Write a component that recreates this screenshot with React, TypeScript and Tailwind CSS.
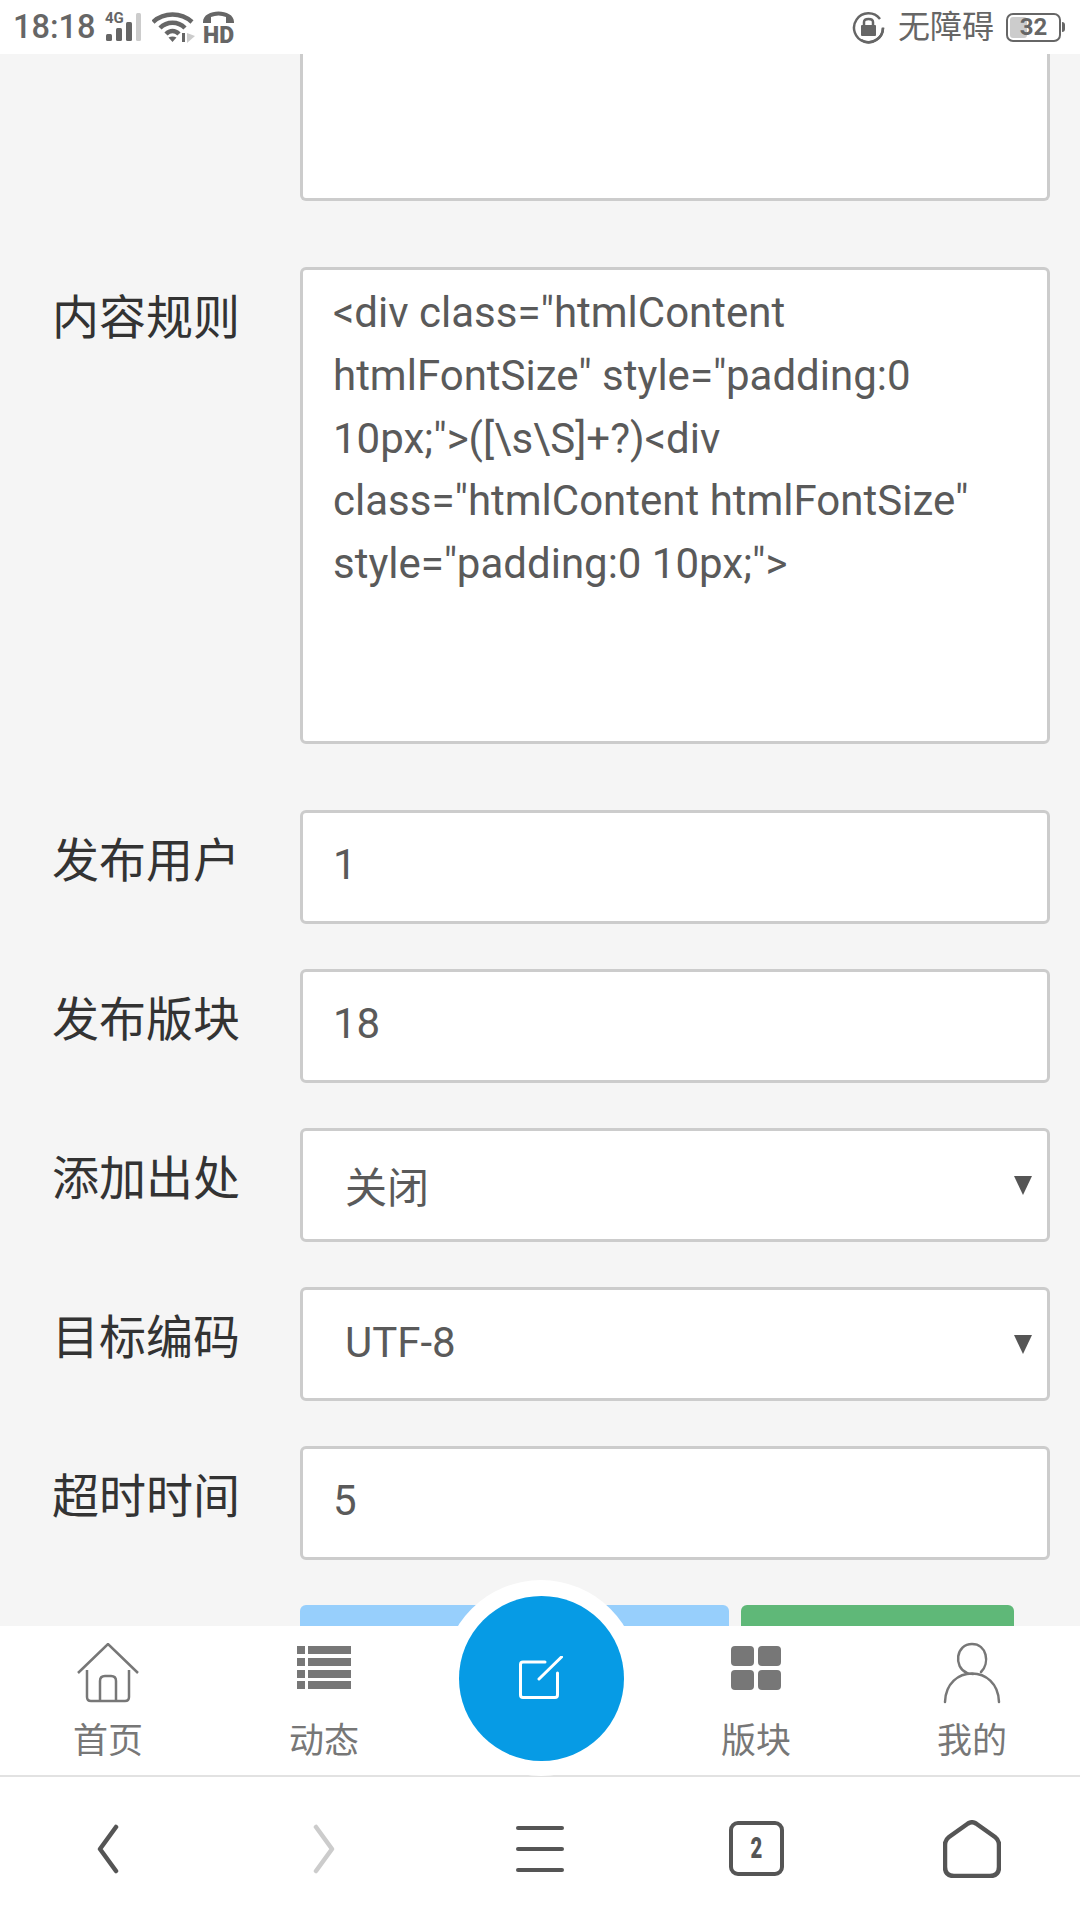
import { Fragment } from "react";

const LABEL_FONT = "font-['Roboto','Noto_Sans_CJK_SC',sans-serif]";

function StatusBar() {
  return (
    <div className={`flex h-[54px] shrink-0 items-center justify-between bg-white pl-[13px] pr-[15px] text-[#666] ${LABEL_FONT}`}>
      <div className="flex items-center">
        <span className="text-[32.5px] font-medium leading-none">18:18</span>
        {/* 4G signal */}
        <svg className="ml-[10px] overflow-visible" width="37" height="30" viewBox="0 0 37 30">
          <text x="0" y="11" fontSize="15" fontWeight="700" fill="#666" fontFamily="Roboto">4G</text>
          <rect x="1" y="22" width="6" height="7" rx="1.5" fill="#666" />
          <rect x="11" y="16" width="6" height="13" rx="1.5" fill="#666" />
          <rect x="21" y="10" width="6" height="19" rx="1.5" fill="#666" />
          <rect x="31" y="1" width="5" height="28" rx="1.5" fill="#ccc" />
        </svg>
        {/* wifi */}
        <svg className="ml-[10px]" width="44" height="32" viewBox="0 0 44 32" fill="none">
          <path d="M1 11 C12 1 29 1 40 11" stroke="#666" strokeWidth="4.500" />
          <path d="M8 17 C15 10 26 10 33 17" stroke="#666" strokeWidth="4.500" />
          <path d="M14 23 C18 19 23 19 27 23" stroke="#666" strokeWidth="4.500" />
          <path d="M20.500 31 L16.500 26.500 C19 25 22 25 24.500 26.500 Z" fill="#666" />
          <path d="M30 22 h3 v9 h-3z" fill="#666" />
          <path d="M35 22 L43 25 L35 32 Z" fill="#ccc" />
        </svg>
        {/* HD call */}
        <svg className="ml-[7px] overflow-visible" width="31" height="34" viewBox="0 0 31 34">
          <path d="M0 12 C0 -2 31 -2 31 12 L31 13 L23 13 L23 7 C18 5 13 5 8 7 L8 13 L0 13 Z" fill="#666" />
          <text x="0" y="33" fontSize="24" fontWeight="900" fill="#666" fontFamily="Roboto" textLength="31" lengthAdjust="spacingAndGlyphs">HD</text>
        </svg>
      </div>
      <div className="flex items-center">
        <svg width="33" height="33" viewBox="0 0 33 33" fill="none">
          <path d="M28 8 A14.500 14.500 0 1 0 31 16.500" stroke="#666" strokeWidth="2.500" />
          <path d="M31 17 A14.500 14.500 0 0 1 9 29" stroke="#666" strokeWidth="2.500" />
          <rect x="9" y="14" width="15" height="11" rx="1" fill="#666" />
          <path d="M12 14 V11 C12 7 21 7 21 11 V14" stroke="#666" strokeWidth="2.500" />
        </svg>
        <span className="ml-[13px] text-[32px] leading-none">无障碍</span>
        <div className="relative ml-[12px] flex h-[29px] w-[55px] items-center justify-center overflow-hidden rounded-[7px] border-2 border-[#666]">
          <div className="absolute bottom-[2px] left-[2px] top-[2px] w-[17px] rounded-[3px] bg-[#ccc]" />
          <span className="relative text-[24px] font-bold leading-none">32</span>
        </div>
        <div className="ml-[1px] h-[10px] w-[3px] rounded-r-sm bg-[#666]" />
      </div>
    </div>
  );
}

function Field({ label, value, select, valueClass = "" }: { label: string; value: string; select?: boolean; valueClass?: string }) {
  return (
    <div className="flex items-center">
      <div className="w-[300px] pb-[14px] pl-[52px] text-[47px] leading-none text-[#333]">{label}</div>
      <div className={`flex h-[114px] w-[750px] items-center justify-between rounded-[6px] border-[3px] border-[#ccc] bg-white text-[42px] text-[#5a5a5a] ${select ? "pl-[42px] pr-[15px]" : "pl-[30px]"}`}>
        <span className={`leading-none ${valueClass}`}>{value}</span>
        {select && (
          <svg width="18" height="19" viewBox="0 0 18 19">
            <path d="M0 0 H18 L9 19 Z" fill="#555" />
          </svg>
        )}
      </div>
    </div>
  );
}

function Form() {
  const rule = [
    '<div class="htmlContent',
    'htmlFontSize" style="padding:0',
    '10px;">([\\s\\S]+?)<div',
    'class="htmlContent htmlFontSize"',
    'style="padding:0 10px;">',
  ];
  return (
    <div className="flex min-h-0 flex-1 flex-col overflow-hidden bg-[#f5f5f5]">
      <div className="ml-[300px] h-[147px] w-[750px] shrink-0 rounded-b-[6px] border-[3px] border-t-0 border-[#ccc] bg-white" />

      <div className="mt-[66px] flex shrink-0">
        <div className="w-[300px] pl-[52px] pt-[27px] text-[47px] leading-none text-[#333]">内容规则</div>
        <div className="h-[477px] w-[750px] rounded-[6px] border-[3px] border-[#ccc] bg-white pl-[30px] pt-[12px] text-[42px] leading-[62.8px] text-[#5a5a5a]">
          {rule.map((line) => (
            <Fragment key={line}>
              {line}
              <br />
            </Fragment>
          ))}
        </div>
      </div>

      <div className="mt-[66px] flex shrink-0 flex-col gap-[45px]">
        <Field label="发布用户" value="1" valueClass="pb-[4px]" />
        <Field label="发布版块" value="18" valueClass="pb-[4px]" />
        <Field label="添加出处" value="关闭" select valueClass="pt-[8px]" />
        <Field label="目标编码" value="UTF-8" select valueClass="pb-[2px]" />
        <Field label="超时时间" value="5" valueClass="pb-[4px]" />
      </div>

      <div className="ml-[300px] mt-[45px] flex shrink-0 gap-[12px]">
        <div className="h-[60px] w-[429px] rounded-t-[6px] bg-[#97cffc]" />
        <div className="h-[60px] w-[273px] rounded-t-[6px] bg-[#5fb878]" />
      </div>
    </div>
  );
}

function TabItem({ label, children }: { label: string; children: React.ReactNode }) {
  return (
    <div className="flex w-[216px] flex-col items-center pt-[16px]">
      <div className="flex h-[62px] items-center justify-center">{children}</div>
      <span className="mt-[16px] text-[35px] leading-[44px] text-[#777]">{label}</span>
    </div>
  );
}

function TabBar() {
  return (
    <div className={`relative flex h-[151px] shrink-0 border-b-2 border-[#e2e2e2] bg-white ${LABEL_FONT}`}>
      <TabItem label="首页">
        <svg width="62" height="60" viewBox="0 0 62 60" fill="none" stroke="#777" strokeWidth="2.500">
          <path d="M1 30 L31 1 L61 30" />
          <path d="M10 27 V54 Q10 58 14 58 H48 Q52 58 52 54 V27" />
          <path d="M23 58 V38 Q23 33 28 33 H34 Q39 33 39 38 V58" />
        </svg>
      </TabItem>
      <TabItem label="动态">
        <svg className="mb-[11px]" width="56" height="46" viewBox="0 0 56 46" fill="#777">
          <rect x="1" y="1" width="8" height="8" />
          <rect x="12" y="1" width="43" height="8" />
          <rect x="1" y="13" width="8" height="8" />
          <rect x="12" y="13" width="43" height="8" />
          <rect x="1" y="25" width="8" height="8" />
          <rect x="12" y="25" width="43" height="8" />
          <rect x="1" y="36" width="8" height="8" />
          <rect x="12" y="36" width="43" height="8" />
        </svg>
      </TabItem>
      <div className="w-[216px]" />
      <TabItem label="版块">
        <svg className="mb-[11px]" width="52" height="46" viewBox="0 0 52 46" fill="#777">
          <rect x="1" y="1" width="23" height="20" rx="4" />
          <rect x="28" y="1" width="23" height="20" rx="4" />
          <rect x="1" y="25" width="23" height="20" rx="4" />
          <rect x="28" y="25" width="23" height="20" rx="4" />
        </svg>
      </TabItem>
      <TabItem label="我的">
        <svg width="58" height="62" viewBox="0 0 58 62" fill="none" stroke="#777" strokeWidth="2.500" strokeLinecap="round">
          <path d="M38 30 C47 21 44 2 29 2 C13 2 10 25 24 31 C26 32 28 32 30 32" />
          <path d="M2 60 C3 22 55 22 56 60" />
        </svg>
      </TabItem>
      {/* white ring with the compose button on top of the page */}
      <div className="absolute left-[443px] top-[-46px] flex h-[196px] w-[196px] items-center justify-center rounded-full bg-white">
        <div className="flex h-[165px] w-[165px] items-center justify-center rounded-full bg-[#069be5]">
          <svg className="-ml-[1px]" width="44" height="44" viewBox="0 0 44 44" fill="none" stroke="#fff" strokeWidth="3" strokeLinecap="round" strokeLinejoin="round">
            <path d="M26 6 H4 Q1.500 6 1.500 8.500 V39 Q1.500 41.500 4 41.500 H36 Q38.500 41.500 38.500 39 V17" />
            <path d="M20 23 L42.500 1" />
          </svg>
        </div>
      </div>
    </div>
  );
}

function BrowserBar() {
  return (
    <div className="flex h-[143px] shrink-0 items-center bg-white">
      <div className="flex w-[216px] justify-center">
        <svg width="22" height="50" viewBox="0 0 22 50" fill="none" stroke="#555" strokeWidth="4.500" strokeLinecap="round" strokeLinejoin="round">
          <path d="M19 3 L3 25 L19 47" />
        </svg>
      </div>
      <div className="flex w-[216px] justify-center">
        <svg width="22" height="50" viewBox="0 0 22 50" fill="none" stroke="#ccc" strokeWidth="4.500" strokeLinecap="round" strokeLinejoin="round">
          <path d="M3 3 L19 25 L3 47" />
        </svg>
      </div>
      <div className="flex w-[216px] justify-center">
        <div className="flex w-[48px] flex-col gap-[17px]">
          <div className="h-[4px] rounded-full bg-[#555]" />
          <div className="h-[4px] rounded-full bg-[#555]" />
          <div className="h-[4px] rounded-full bg-[#555]" />
        </div>
      </div>
      <div className="flex w-[216px] justify-center">
        <div className="flex h-[55px] w-[55px] items-center justify-center rounded-[9px] border-[4px] border-[#555] text-[#555]">
          <span className="scale-x-[0.7] text-[29px] font-black leading-none">2</span>
        </div>
      </div>
      <div className="flex w-[216px] justify-center">
        <svg width="58" height="58" viewBox="0 0 58 58" fill="none" stroke="#555" strokeWidth="4.500" strokeLinejoin="round">
          <path d="M25 3.500 Q29 1 33 3.500 L52 17 Q56 20 56 25 V47 Q56 56 47 56 H11 Q2 56 2 47 V25 Q2 20 6 17 Z" />
        </svg>
      </div>
    </div>
  );
}

export default function App() {
  return (
    <div className={`flex h-[1920px] w-[1080px] flex-col overflow-hidden bg-white ${LABEL_FONT}`}>
      <StatusBar />
      <Form />
      <TabBar />
      <BrowserBar />
    </div>
  );
}
